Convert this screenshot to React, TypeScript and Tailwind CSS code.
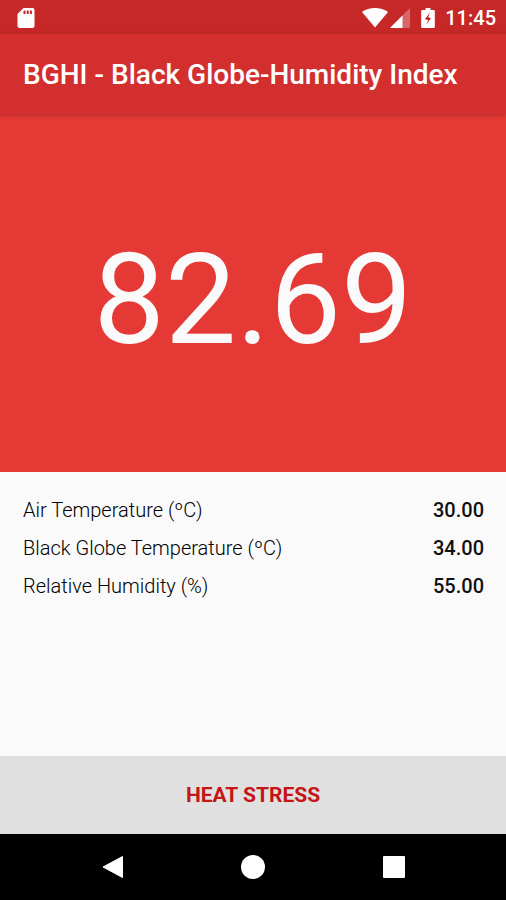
const readings = [
  { label: "Air Temperature (ºC)", value: "30.00" },
  { label: "Black Globe Temperature (ºC)", value: "34.00" },
  { label: "Relative Humidity (%)", value: "55.00" },
];

function StatusBar() {
  return (
    <div className="flex h-[34px] items-center justify-between bg-[#c62828] pr-[10px] pl-[17px] pt-px text-white">
      <svg viewBox="0 0 18 20" className="h-5 w-[18px]" fill="currentColor" aria-hidden="true">
        <path
          fillRule="evenodd"
          d="M6.500 0H15.500a2 2 0 0 1 2 2V18a2 2 0 0 1-2 2H2.500a2 2 0 0 1-2-2V6ZM6.500 2.500v3.500h2V2.500ZM9.700 2.500v3.500h2V2.500ZM12.900 2.500v3.500h2V2.500Z"
        />
      </svg>
      <div className="flex items-center">
        <svg viewBox="0 0 26 20" className="h-5 w-[26px]" fill="currentColor" aria-hidden="true">
          <path d="M13 19.500 0 4C7-1.300 19-1.300 26 4Z" />
        </svg>
        <svg viewBox="0 0 20 20" className="ml-[2px] h-5 w-5" fill="currentColor" aria-hidden="true">
          <path d="M20 0V20H0Z" opacity="0.3" />
          <path d="M12.500 7.500V20H0Z" />
        </svg>
        <svg viewBox="0 0 14 20" className="ml-[11px] h-5 w-[14px]" fill="currentColor" aria-hidden="true">
          <path
            fillRule="evenodd"
            d="M4.500 0h5v2H12.500a1.300 1.300 0 0 1 1.300 1.300v15.400A1.300 1.300 0 0 1 12.500 20H1.500A1.300 1.300 0 0 1 .2 18.700v-15.400A1.300 1.300 0 0 1 1.500 2h3ZM9 4.500 4 11 7.200 12.200 5 17 10 10.300 7.200 9.300Z"
          />
        </svg>
        <span className="ml-[10px] text-[20px] leading-6 font-medium">11:45</span>
      </div>
    </div>
  );
}

function NavBar() {
  return (
    <nav className="flex h-[66px] items-center justify-center gap-[93px] bg-black text-white">
      <button type="button" aria-label="Back" className="flex size-12 items-center justify-center">
        <svg viewBox="0 0 24 24" className="size-6" fill="currentColor" aria-hidden="true">
          <path d="M22.500 1.500V22.500L3 12Z" stroke="currentColor" strokeLinejoin="round" />
        </svg>
      </button>
      <button type="button" aria-label="Home" className="flex size-12 items-center justify-center">
        <svg viewBox="0 0 24 24" className="size-6" fill="currentColor" aria-hidden="true">
          <circle cx="12" cy="12" r="12" />
        </svg>
      </button>
      <button type="button" aria-label="Recent apps" className="flex size-12 items-center justify-center">
        <svg viewBox="0 0 24 24" className="size-6" fill="currentColor" aria-hidden="true">
          <rect x="1" y="1" width="22" height="22" rx="1" />
        </svg>
      </button>
    </nav>
  );
}

export default function App() {
  return (
    <div className="flex min-h-screen flex-col bg-[#fafafa] font-[Roboto,sans-serif] text-[#111111]">
      <StatusBar />
      <header className="relative flex h-20 items-center bg-[#d32f2f] px-[23px] pt-0.5 shadow-[0_1px_4px_rgba(0,0,0,0.25)]">
        <h1 className="text-[28px] leading-8 font-medium whitespace-nowrap text-white">
          BGHI - Black Globe-Humidity Index
        </h1>
      </header>
      <section className="flex h-[358px] items-center justify-center bg-[#e53935]">
        <p className="pt-3 text-[127px] leading-none text-[#fafafa]">82.69</p>
      </section>
      <dl className="flex flex-1 flex-col gap-3 pt-[25px] pr-[22px] pl-[23px]">
        {readings.map((r) => (
          <div key={r.label} className="flex justify-between text-[20px] leading-[26px]">
            <dt className="font-light text-black">{r.label}</dt>
            <dd className="font-medium">{r.value}</dd>
          </div>
        ))}
      </dl>
      <button type="button" className="h-[78px] bg-[#e0e0e0] pt-0.5 text-[21px] font-bold text-[#c41616]">
        HEAT STRESS
      </button>
      <NavBar />
    </div>
  );
}
